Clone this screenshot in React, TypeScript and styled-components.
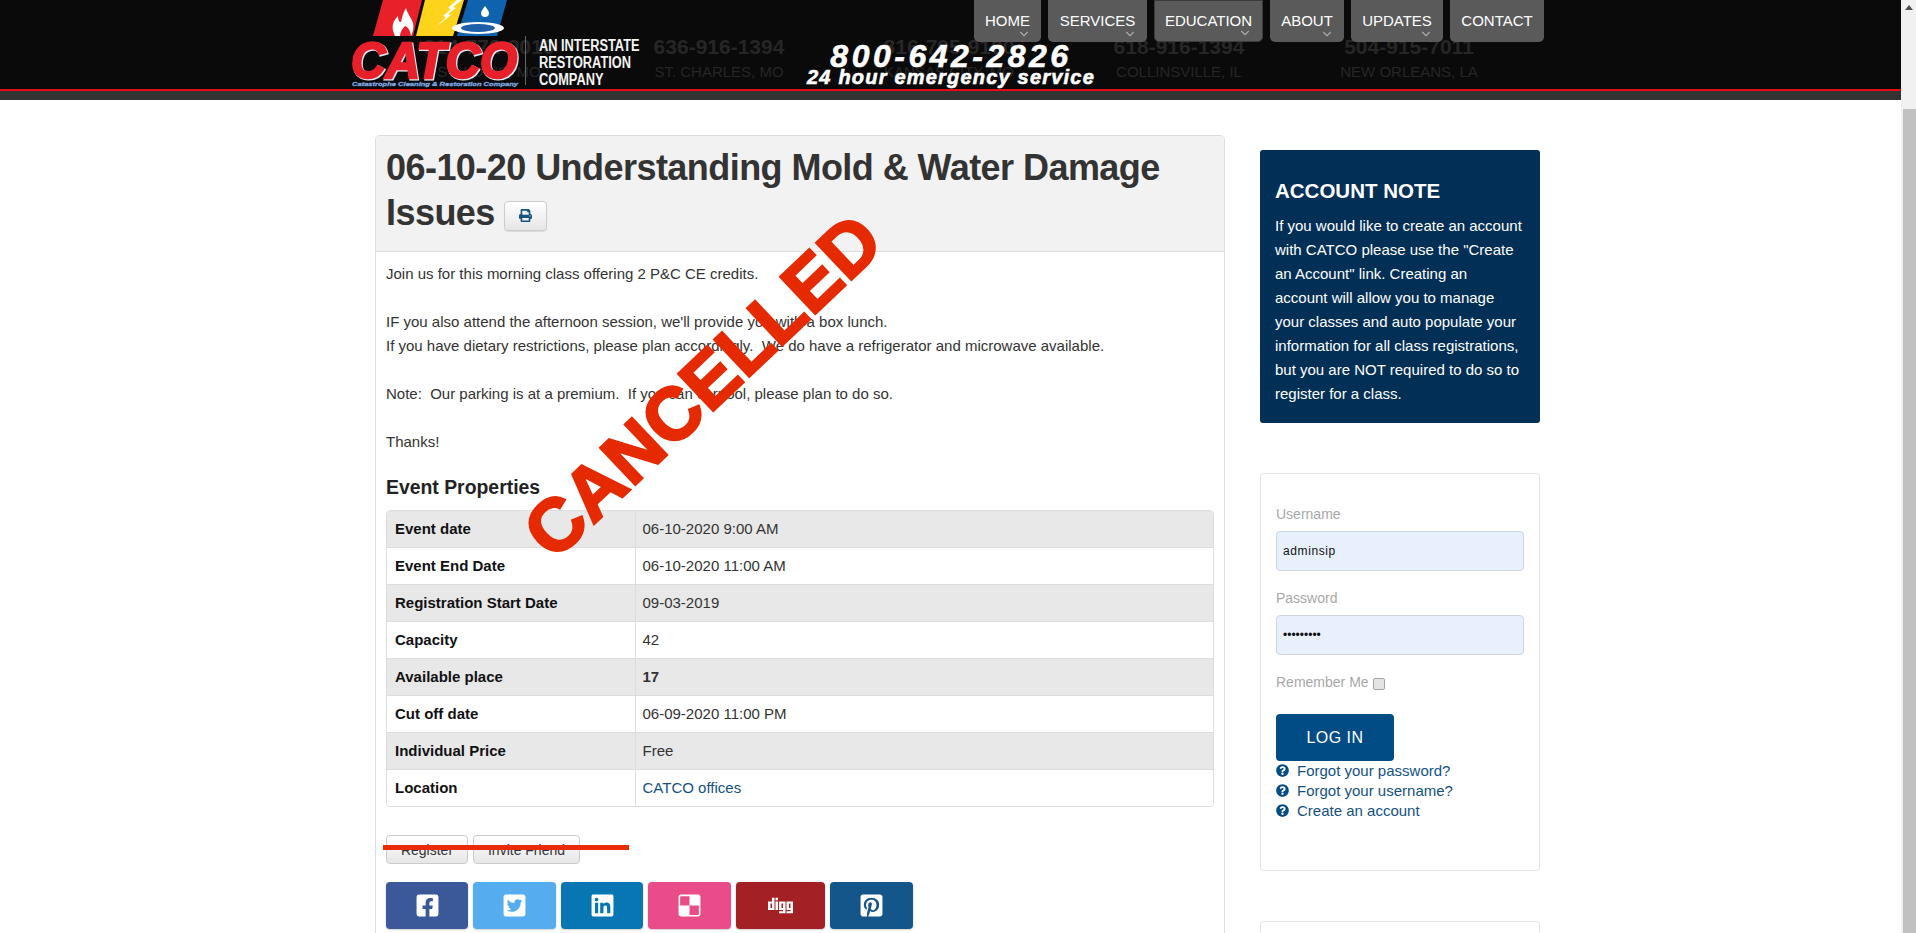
import React from "react";
import styled, { createGlobalStyle } from "styled-components";
import {
    FaPrint,
    FaQuestionCircle,
    FaFacebookSquare,
    FaTwitterSquare,
    FaLinkedin,
    FaDelicious,
    FaDigg,
    FaPinterestSquare,
} from "react-icons/fa";
import { FiChevronDown } from "react-icons/fi";

const GlobalStyle = createGlobalStyle`
    html, body {
        margin: 0;
        padding: 0;
        height: 933px;
        overflow: hidden;
        background: #fff;
        font-family: "Liberation Sans", Arial, sans-serif;
        font-size: 15px;
        color: #333;
    }
    * { box-sizing: border-box; }
`;

const Shell = styled.div`
    display: flex;
    width: 1916px;
    height: 933px;
    overflow: hidden;
`;

const Page = styled.div`
    width: 1901px;
    height: 933px;
    overflow: hidden;
`;

const ScrollTrack = styled.div`
    width: 15px;
    height: 933px;
    background: #f1f1f1;
    border-left: 1px solid #eee;
    display: flex;
    flex-direction: column;
    align-items: flex-end;
`;

const ScrollArrow = styled.div`
    width: 14px;
    height: 15px;
    display: flex;
    align-items: center;
    justify-content: center;
    &::before {
        content: "";
        border-left: 4px solid transparent;
        border-right: 4px solid transparent;
        border-bottom: 5px solid #505050;
    }
`;

const ScrollThumb = styled.div`
    width: 13px;
    margin-top: 94px;
    flex: 1;
    background: #c1c1c1;
`;

const Header = styled.header`
    position: relative;
    height: 100px;
    background: #333;
`;

const HeaderBand = styled.div`
    display: flex;
    height: 91px;
    padding: 33px 0 0 374px;
    background: #0a0a0a;
    border-bottom: 2px solid #e60b14;
`;

const Branch = styled.div`
    width: 230px;
    text-align: center;
    color: #262626;
`;

const BranchPhone = styled.div`
    font-size: 21px;
    font-weight: bold;
    line-height: 28px;
`;

const BranchCity = styled.div`
    font-size: 15px;
    line-height: 22px;
`;

const Logo = styled.svg`
    position: absolute;
    left: 345px;
    top: 0;
`;

const Interstate = styled.div`
    position: absolute;
    left: 539px;
    top: 37px;
    font-size: 16px;
    font-weight: bold;
    line-height: 17px;
    color: #f4f4f4;
    white-space: nowrap;
    transform: scaleX(0.8);
    transform-origin: left top;
`;

const Emergency = styled.div`
    position: absolute;
    left: 805px;
    top: 40px;
    width: 292px;
    text-align: center;
    color: #fff;
    font-weight: bold;
    font-style: italic;
    white-space: nowrap;
    -webkit-text-stroke: 0.6px #fff;
`;

const EmergencyPhone = styled.div`
    font-size: 32px;
    line-height: 32px;
    letter-spacing: 3.5px;
`;

const EmergencyText = styled.div`
    margin-top: -4px;
    font-size: 20px;
    line-height: 18px;
    letter-spacing: 1.2px;
`;

const Nav = styled.nav`
    position: absolute;
    left: 974px;
    top: 0;
    display: flex;
    gap: 7px;
`;

const NavItem = styled.a<{ $w: number; $active?: boolean }>`
    position: relative;
    width: ${(p) => p.$w}px;
    height: 42px;
    display: flex;
    align-items: flex-start;
    justify-content: center;
    padding-top: 12px;
    background: #5a5a5a;
    color: #fff;
    font-size: 15px;
    line-height: 18px;
    border-radius: 0 0 5px 5px;
    ${(p) => p.$active && "border: 1px solid #3c3c3c; padding-top: 11px;"}
    svg {
        position: absolute;
        right: 10px;
        bottom: 1px;
        color: #a9a9a9;
        font-size: 14px;
    }
`;

const Main = styled.main`
    display: flex;
    gap: 35px;
    padding: 35px 0 0 375px;
`;

const Panel = styled.section`
    position: relative;
    width: 850px;
    height: 830px;
    flex-shrink: 0;
    border: 1px solid #ddd;
    border-radius: 5px 5px 0 0;
`;

const PanelHead = styled.div`
    height: 116px;
    padding: 9px 10px 0;
    background: #f2f2f2;
    border-bottom: 1px solid #ddd;
    border-radius: 5px 5px 0 0;
`;

const Title = styled.h1`
    margin: 0;
    font-size: 36px;
    line-height: 45px;
    font-weight: bold;
    letter-spacing: -0.55px;
    color: #333;
`;

const PrintButton = styled.span`
    display: inline-flex;
    align-items: center;
    justify-content: center;
    width: 43px;
    height: 30px;
    vertical-align: 3px;
    color: #14527f;
    font-size: 13px;
    background: linear-gradient(#fff, #e6e6e6);
    border: 1px solid #ccc;
    border-radius: 4px;
    box-shadow: 0 1px 1px rgba(0, 0, 0, 0.1);
`;

const PanelBody = styled.div`
    padding: 10px 10px 0;
`;

const Intro = styled.p`
    margin: 0;
    font-size: 15px;
    line-height: 24px;
    color: #333;
`;

const SubTitle = styled.h3`
    margin: 21px 0 11px;
    font-size: 19.4px;
    line-height: 24px;
    font-weight: bold;
    color: #222;
`;

const TableWrap = styled.div`
    height: 297px;
    border: 1px solid #ddd;
    border-radius: 4px;
    overflow: hidden;
`;

const Table = styled.table`
    width: 100%;
    height: 100%;
    border-collapse: collapse;
    font-size: 15px;
`;

const Row = styled.tr`
    &:nth-child(odd) { background: #e8e8e8; }
    & + & td, & + & th { border-top: 1px solid #ddd; }
`;

const Label = styled.th`
    width: 248px;
    padding: 0 8px 1px;
    text-align: left;
    font-weight: bold;
    color: #111;
    border-right: 1px solid #ddd;
`;

const Value = styled.td<{ $bold?: boolean }>`
    padding: 0 7px 1px;
    color: #333;
    font-weight: ${(p) => (p.$bold ? "bold" : "normal")};
`;

const Anchor = styled.a`
    color: #14527f;
`;

const ButtonRow = styled.div`
    position: relative;
    display: flex;
    gap: 5px;
    margin-top: 28px;
`;

const PlainButton = styled.span<{ $w: number }>`
    display: flex;
    align-items: center;
    justify-content: center;
    width: ${(p) => p.$w}px;
    height: 29px;
    font-size: 14px;
    color: #333;
    background: linear-gradient(#fff, #e6e6e6);
    border: 1px solid #ccc;
    border-radius: 4px;
`;

const Strike = styled.div`
    position: absolute;
    left: -3px;
    top: 10px;
    width: 246px;
    height: 5px;
    background: #e82b00;
`;

const ShareRow = styled.div`
    display: flex;
    gap: 5px;
    margin-top: 18px;
`;

const ShareButton = styled.a<{ $w: number; $bg: string }>`
    display: flex;
    align-items: center;
    justify-content: center;
    width: ${(p) => p.$w}px;
    height: 47px;
    color: #fff;
    font-size: 25px;
    background: ${(p) => p.$bg};
    border-radius: 4px;
    box-shadow: 0 1px 2px rgba(0, 0, 0, 0.2);
`;

const Cancelled = styled.div`
    position: absolute;
    left: 327px;
    top: 250px;
    transform: translate(-50%, -50%) rotate(-43.5deg);
    font-size: 74px;
    line-height: 74px;
    font-weight: bold;
    letter-spacing: 0.3px;
    color: #e62a00;
    white-space: nowrap;
    -webkit-text-stroke: 2.5px #e62a00;
`;

const Side = styled.aside`
    width: 280px;
    flex-shrink: 0;
    padding-top: 15px;
`;

const NoteBox = styled.div`
    height: 273px;
    padding: 26px 10px 0 15px;
    background: #022f56;
    color: #fff;
    border-radius: 3px;
`;

const NoteTitle = styled.h4`
    margin: 0 0 8px;
    font-size: 20.5px;
    line-height: 30px;
    font-weight: bold;
`;

const NoteText = styled.p`
    margin: 0;
    font-size: 15px;
    line-height: 24px;
`;

const Card = styled.div<{ $h: number; $mt: number }>`
    height: ${(p) => p.$h}px;
    margin-top: ${(p) => p.$mt}px;
    padding: 30px 15px 0 15px;
    border: 1px solid #e3e3e3;
    border-radius: 4px;
`;

const FieldLabel = styled.label`
    display: block;
    font-size: 14px;
    line-height: 20px;
    color: #a8a8a8;
`;

const Field = styled.input`
    display: block;
    width: 248px;
    height: 40px;
    margin: 7px 0 17px;
    padding: 0 6px;
    font-family: "Liberation Sans", Arial, sans-serif;
    font-size: 12px;
    letter-spacing: 0.6px;
    color: #111;
    background: #e8f0fe;
    border: 1px solid #ccd5e2;
    border-radius: 4px;
    outline: none;
    &[type="password"] { letter-spacing: 0; }
`;

const RememberRow = styled.div`
    display: flex;
    align-items: center;
    gap: 4px;
    height: 20px;
`;

const Check = styled.span`
    width: 12px;
    height: 12px;
    margin-top: 3px;
    background: #e4e4e4;
    border: 1px solid #a5a5a5;
    border-radius: 2px;
`;

const LoginButton = styled.a`
    display: flex;
    align-items: center;
    justify-content: center;
    width: 118px;
    height: 47px;
    margin: 22px 0 -1px;
    background: #024c85;
    color: #fff;
    font-size: 16px;
    letter-spacing: 0.5px;
    border-radius: 4px;
`;

const HelpLink = styled.a`
    display: flex;
    align-items: center;
    gap: 8px;
    height: 20px;
    font-size: 15px;
    color: #14527f;
    svg { font-size: 13px; color: #024c85; }
`;

const branches = [
    { phone: "314-772-0010", city: "ST. LOUIS, MO" },
    { phone: "636-916-1394", city: "ST. CHARLES, MO" },
    { phone: "816-795-9100", city: "KANSAS CITY, MO" },
    { phone: "618-916-1394", city: "COLLINSVILLE, IL" },
    { phone: "504-915-7011", city: "NEW ORLEANS, LA" },
];

const navItems = [
    { label: "HOME", w: 67, caret: true },
    { label: "SERVICES", w: 99, caret: true },
    { label: "EDUCATION", w: 109, caret: true, active: true },
    { label: "ABOUT", w: 74, caret: true },
    { label: "UPDATES", w: 92, caret: true },
    { label: "CONTACT", w: 94 },
];

const properties: { label: string; value: React.ReactNode; bold?: boolean }[] = [
    { label: "Event date", value: "06-10-2020 9:00 AM" },
    { label: "Event End Date", value: "06-10-2020 11:00 AM" },
    { label: "Registration Start Date", value: "09-03-2019" },
    { label: "Capacity", value: "42" },
    { label: "Available place", value: "17", bold: true },
    { label: "Cut off date", value: "06-09-2020 11:00 PM" },
    { label: "Individual Price", value: "Free" },
    { label: "Location", value: <Anchor>CATCO offices</Anchor> },
];

const shares = [
    { w: 82, bg: "#3b5998", icon: <FaFacebookSquare /> },
    { w: 83, bg: "#55acee", icon: <FaTwitterSquare /> },
    { w: 82, bg: "#0976b4", icon: <FaLinkedin /> },
    { w: 83, bg: "#ea4c89", icon: <FaDelicious /> },
    { w: 89, bg: "#a32125", icon: <FaDigg /> },
    { w: 83, bg: "#14568a", icon: <FaPinterestSquare /> },
];

const CatcoLogo = () => (
    <Logo width="181" height="90" viewBox="0 0 181 90">
        <polygon points="28,36 38,0 77,0 68,36" fill="#e8202a" />
        <polygon points="71,36 80,0 119,0 108,36" fill="#fdd31c" />
        <polygon points="112,36 123,0 162,0 152,36" fill="#0f62ae" />
        <path d="M50 36c-4-8-3-14 3-20 0 4 1 6 3 6 1-5 2-9 5-14 1 5 5 9 7 15 1 5 0 9-2 13-1-6-3-9-6-10-3 3-5 6-5 10z" fill="#fff" />
        <path d="M112 0l-9 8 3 1-8 7 3 1-10 10 15-12-3-1 8-6-3-1 9-7z" fill="#fff" />
        <path d="M140 6c2 3 4 5 4 7a4 4 0 0 1-8 0c0-2 2-4 4-7z" fill="#fff" />
        <ellipse cx="133" cy="28" rx="26" ry="6" fill="#fff" />
        <ellipse cx="133" cy="28" rx="17" ry="4" fill="#1f5fa8" />
        <text x="7" y="79" fontFamily="Liberation Sans" fontWeight="bold" fontStyle="italic" fontSize="50" textLength="166" lengthAdjust="spacingAndGlyphs" fill="#9cc2ee" stroke="#dfe9f6" strokeWidth="3">CATCO</text>
        <text x="6" y="78" fontFamily="Liberation Sans" fontWeight="bold" fontStyle="italic" fontSize="50" textLength="166" lengthAdjust="spacingAndGlyphs" fill="#e8202a" stroke="#e8202a" strokeWidth="2.5">CATCO</text>
        <text x="7" y="86" fontFamily="Liberation Sans" fontWeight="bold" fontStyle="italic" fontSize="6" textLength="166" lengthAdjust="spacingAndGlyphs" fill="#7fa8e0" stroke="#7fa8e0" strokeWidth="0.3">Catastrophe Cleaning &amp; Restoration Company</text>
        <line x1="180.5" y1="36" x2="180.5" y2="85" stroke="#666" />
    </Logo>
);

const App = () => (
    <Shell>
        <GlobalStyle />
        <Page>
            <Header>
                <HeaderBand>
                    {branches.map((b) => (
                        <Branch key={b.phone}>
                            <BranchPhone>{b.phone}</BranchPhone>
                            <BranchCity>{b.city}</BranchCity>
                        </Branch>
                    ))}
                </HeaderBand>
                <CatcoLogo />
                <Interstate>
                    AN INTERSTATE
                    <br />
                    RESTORATION
                    <br />
                    COMPANY
                </Interstate>
                <Emergency>
                    <EmergencyPhone>800-642-2826</EmergencyPhone>
                    <EmergencyText>24 hour emergency service</EmergencyText>
                </Emergency>
                <Nav>
                    {navItems.map((item) => (
                        <NavItem key={item.label} $w={item.w} $active={item.active}>
                            {item.label}
                            {item.caret && <FiChevronDown />}
                        </NavItem>
                    ))}
                </Nav>
            </Header>
            <Main>
                <Panel>
                    <PanelHead>
                        <Title>
                            06-10-20 Understanding Mold &amp; Water Damage Issues{" "}
                            <PrintButton>
                                <FaPrint />
                            </PrintButton>
                        </Title>
                    </PanelHead>
                    <PanelBody>
                        <Intro>
                            Join us for this morning class offering 2 P&amp;C CE credits.
                            <br />
                            <br />
                            IF you also attend the afternoon session, we'll provide you with a box lunch.
                            <br />
                            If you have dietary restrictions, please plan accordingly.&nbsp; We do have a refrigerator and microwave available.
                            <br />
                            <br />
                            Note:&nbsp; Our parking is at a premium.&nbsp; If you can carpool, please plan to do so.
                            <br />
                            <br />
                            Thanks!
                        </Intro>
                        <SubTitle>Event Properties</SubTitle>
                        <TableWrap>
                            <Table>
                                <tbody>
                                    {properties.map((p) => (
                                        <Row key={p.label}>
                                            <Label>{p.label}</Label>
                                            <Value $bold={p.bold}>{p.value}</Value>
                                        </Row>
                                    ))}
                                </tbody>
                            </Table>
                        </TableWrap>
                        <ButtonRow>
                            <PlainButton $w={82}>Register</PlainButton>
                            <PlainButton $w={107}>Invite Friend</PlainButton>
                            <Strike />
                        </ButtonRow>
                        <ShareRow>
                            {shares.map((s) => (
                                <ShareButton key={s.bg} $w={s.w} $bg={s.bg}>
                                    {s.icon}
                                </ShareButton>
                            ))}
                        </ShareRow>
                    </PanelBody>
                    <Cancelled>CANCELLED</Cancelled>
                </Panel>
                <Side>
                    <NoteBox>
                        <NoteTitle>ACCOUNT NOTE</NoteTitle>
                        <NoteText>
                            If you would like to create an account
                            <br />
                            with CATCO please use the "Create
                            <br />
                            an Account" link. Creating an
                            <br />
                            account will allow you to manage
                            <br />
                            your classes and auto populate your
                            <br />
                            information for all class registrations,
                            <br />
                            but you are NOT required to do so to
                            <br />
                            register for a class.
                        </NoteText>
                    </NoteBox>
                    <Card $h={398} $mt={50}>
                        <FieldLabel>Username</FieldLabel>
                        <Field type="text" defaultValue="adminsip" readOnly />
                        <FieldLabel>Password</FieldLabel>
                        <Field type="password" defaultValue="adminsip1" readOnly />
                        <RememberRow>
                            <FieldLabel>Remember Me</FieldLabel>
                            <Check />
                        </RememberRow>
                        <LoginButton>LOG IN</LoginButton>
                        <HelpLink><FaQuestionCircle />Forgot your password?</HelpLink>
                        <HelpLink><FaQuestionCircle />Forgot your username?</HelpLink>
                        <HelpLink><FaQuestionCircle />Create an account</HelpLink>
                    </Card>
                    <Card $h={100} $mt={50} />
                </Side>
            </Main>
        </Page>
        <ScrollTrack>
            <ScrollArrow />
            <ScrollThumb />
        </ScrollTrack>
    </Shell>
);

export default App;
